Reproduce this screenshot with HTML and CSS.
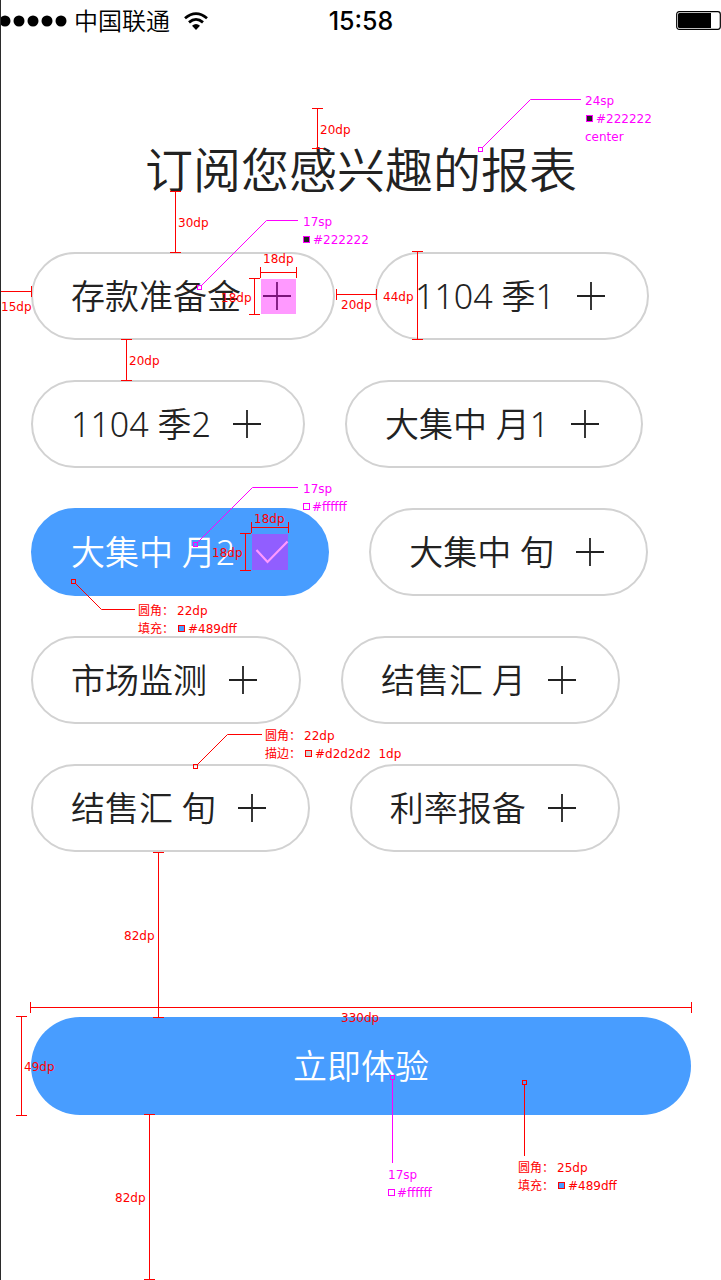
FILE: index.html
```html
<!DOCTYPE html>
<html lang="zh-CN">
<head>
<meta charset="utf-8">
<meta name="viewport" content="width=device-width, initial-scale=1">
<title>订阅您感兴趣的报表</title>
<link rel="stylesheet" href="styles.css">
</head>
<body>
<svg class="defs" aria-hidden="true">
  <symbol id="plus" viewBox="0 0 36 36"><path d="M4 18H32M18 4V32" fill="none" stroke="currentColor" stroke-width="1.8"/></symbol>
  <symbol id="check" viewBox="0 0 36 36"><path d="M3.5 16L14.5 28L34.5 7.5" fill="none" stroke="currentColor" stroke-width="2.2"/></symbol>
</svg>
<div class="page">
  <header class="status">
    <div class="carrier">
      <svg class="signal" viewBox="0 0 67 12" aria-hidden="true"><circle cx="4" cy="6" r="5.5"/><circle cx="18" cy="6" r="5.5"/><circle cx="32" cy="6" r="5.5"/><circle cx="46" cy="6" r="5.5"/><circle cx="60" cy="6" r="5.5"/></svg>
      <span>中国联通</span>
      <svg class="wifi" viewBox="0 0 24 18" aria-hidden="true"><g fill="none" stroke="#000" stroke-width="2.8"><path d="M1 6.2Q12 -3 23 6.2"/><path d="M5 10.4Q12 4.4 19 10.4"/></g><path d="M8 13.8Q12 10.4 16 13.8L12 18Z"/></svg>
    </div>
    <time class="clock">15:58</time>
    <svg class="battery" viewBox="0 0 45 19" aria-hidden="true"><rect x=".7" y=".7" width="43.6" height="17.6" rx="2.5" fill="#fff" stroke="#000" stroke-width="1.2"/><path d="M3.5 2H35V17H3.5Q2 17 2 15.5V3.5Q2 2 3.5 2Z"/></svg>
  </header>
  <main class="content">
    <h1 class="title">订阅您感兴趣的报表</h1>
    <div class="chips">
      <button class="chip" type="button" aria-pressed="false">存款准备金<svg class="icon"><use href="#plus"/></svg></button>
      <button class="chip" type="button" aria-pressed="false">1104 季1<svg class="icon"><use href="#plus"/></svg></button>
      <button class="chip" type="button" aria-pressed="false">1104 季2<svg class="icon"><use href="#plus"/></svg></button>
      <button class="chip" type="button" aria-pressed="false">大集中 月1<svg class="icon"><use href="#plus"/></svg></button>
      <button class="chip chip-on" type="button" aria-pressed="true">大集中 月2<svg class="icon"><use href="#check"/></svg></button>
      <button class="chip" type="button" aria-pressed="false">大集中 旬<svg class="icon"><use href="#plus"/></svg></button>
      <button class="chip" type="button" aria-pressed="false">市场监测<svg class="icon"><use href="#plus"/></svg></button>
      <button class="chip" type="button" aria-pressed="false">结售汇 月<svg class="icon"><use href="#plus"/></svg></button>
      <button class="chip" type="button" aria-pressed="false">结售汇 旬<svg class="icon"><use href="#plus"/></svg></button>
      <button class="chip" type="button" aria-pressed="false">利率报备<svg class="icon"><use href="#plus"/></svg></button>
    </div>
    <button class="submit" type="button">立即体验</button>
  </main>

  <svg class="specs" width="721" height="1280" viewBox="0 0 721 1280">
    <g class="area">
      <rect x="261" y="279" width="35" height="35"/>
      <rect x="252" y="534" width="36" height="36"/>
    </g>
    <!-- dimension lines -->
    <g class="red line">
      <path d="M317.5 108V149M312 108.5h11M312 148.5h11"/>
      <path d="M175.5 191V253M170 191.5h11M170 252.5h11"/>
      <path d="M126.5 339V381M121 339.5h11M121 380.5h11"/>
      <path d="M254.5 278V315M249 278.5h11M249 314.5h11"/>
      <path d="M417.5 251V340M412 251.5h11M412 339.5h11"/>
      <path d="M245.5 533V571M240 533.5h11M240 570.5h11"/>
      <path d="M158.5 852V1018M153 852.5h11M153 1017.5h11"/>
      <path d="M21.5 1016V1116M16 1016.5h11M16 1115.5h11"/>
      <path d="M149.5 1114V1280M144 1114.5h11M144 1279.5h11"/>
      <path d="M0 291.5H32M0.5 286v11M31.5 286v11"/>
      <path d="M260 272.5H297M260.5 267v11M296.5 267v11"/>
      <path d="M336 294.5H377M336.5 289v11M376.5 289v11"/>
      <path d="M251 527.5H289M251.5 522v11M288.5 522v11"/>
      <path d="M30 1007.5H692M30.5 1002v11M691.5 1002v11"/>
    </g>
    <g class="red label">
      <text x="320" y="134">20dp</text>
      <text x="178" y="227">30dp</text>
      <text x="129" y="365">20dp</text>
      <text x="221" y="302">18dp</text>
      <text x="383" y="301">44dp</text>
      <text x="212" y="557">18dp</text>
      <text x="124" y="940">82dp</text>
      <text x="24" y="1071">49dp</text>
      <text x="115" y="1202">82dp</text>
      <text x="1" y="311">15dp</text>
      <text x="263" y="263">18dp</text>
      <text x="341" y="309">20dp</text>
      <text x="254" y="523">18dp</text>
      <text x="341" y="1022">330dp</text>
    </g>
    <!-- text style callouts -->
    <g class="pink line">
      <path d="M482 148L530.5 99.5H581"/><rect x="478.5" y="147.5" width="4" height="4"/>
      <path d="M201 286L266.5 220.5H298"/><rect x="197.5" y="285.5" width="4" height="4"/>
      <path d="M197 543L252.5 487.5H298"/><rect x="193.5" y="542.5" width="4" height="4"/>
      <path d="M392.5 1080V1163"/><rect x="390.5" y="1075.5" width="4" height="4"/>
      <rect class="dark" x="586.5" y="115.5" width="6" height="6"/>
      <rect class="dark" x="303.5" y="236.5" width="6" height="6"/>
      <rect class="white" x="303.5" y="503.5" width="6" height="6"/>
      <rect class="white" x="388.5" y="1189.5" width="6" height="6"/>
    </g>
    <g class="pink label">
      <text x="585" y="105">24sp</text><text x="596" y="123">#222222</text><text x="585" y="141">center</text>
      <text x="303" y="226">17sp</text><text x="313" y="244">#222222</text>
      <text x="303" y="493">17sp</text><text x="312" y="511">#ffffff</text>
      <text x="388" y="1179">17sp</text><text x="397" y="1197">#ffffff</text>
    </g>
    <!-- shape callouts -->
    <g class="red line">
      <path d="M75 583L101.5 609.5H135"/><rect x="71.5" y="579.5" width="4" height="4"/>
      <path d="M197 765L227.5 734.5H262"/><rect x="193.5" y="764.5" width="4" height="4"/>
      <path d="M524.5 1085V1156"/><rect x="522.5" y="1080.5" width="4" height="4"/>
      <rect class="blue" x="178.5" y="625.5" width="6" height="6"/>
      <rect class="grey" x="305.5" y="750.5" width="6" height="6"/>
      <rect class="blue" x="558.5" y="1182.5" width="6" height="6"/>
    </g>
    <g class="red label">
      <text x="138" y="615">圆角：</text><text x="177" y="615">22dp</text>
      <text x="138" y="633">填充：</text><text x="188" y="633">#489dff</text>
      <text x="265" y="740">圆角：</text><text x="304" y="740">22dp</text>
      <text x="265" y="758">描边：</text><text x="315" y="758">#d2d2d2&#160; 1dp</text>
      <text x="518" y="1172">圆角：</text><text x="557" y="1172">25dp</text>
      <text x="518" y="1190">填充：</text><text x="568" y="1190">#489dff</text>
    </g>
  </svg>
</div>
</body>
</html>
```
FILE: styles.css
```css
* {
  box-sizing: border-box;
}

body {
  margin: 0;
  background: #fff;
  color: #222;
  font-family: "Noto Sans", "Noto Sans CJK SC", sans-serif;
  font-weight: 350;
}

button {
  font: inherit;
  cursor: pointer;
}

.defs {
  display: none;
}

.page {
  position: relative;
  min-height: 100vh;
  border-left: 1px solid #2b2b2b;
  overflow: hidden;
}

.status {
  display: grid;
  grid-template-columns: 1fr auto 1fr;
  align-items: center;
  height: 41px;
  color: #000;
}

.carrier {
  display: flex;
  align-items: center;
  font-size: 24px;
  line-height: 38px;
}

.signal {
  width: 67px;
  height: 12px;
  margin-right: 6px;
}

.wifi {
  width: 24px;
  height: 18px;
  margin-left: 14px;
}

.clock {
  font-family: Inter, sans-serif;
  font-size: 25px;
  font-weight: 500;
  line-height: 40px;
}

.battery {
  justify-self: end;
  width: 45px;
  height: 19px;
}

.content {
  display: flex;
  flex-direction: column;
  padding: 97px 30px 0;
}

.title {
  margin: 0 0 50px;
  font-size: 48px;
  font-weight: 350;
  line-height: 64px;
  text-align: center;
}

.chips {
  display: flex;
  flex-wrap: wrap;
  gap: 40px;
}

.chip {
  display: flex;
  align-items: center;
  gap: 18px;
  height: 88px;
  padding: 0 38px;
  border: 2px solid #d2d2d2;
  border-radius: 44px;
  background: #fff;
  color: #222;
  font-size: 34px;
  line-height: 48px;
  white-space: nowrap;
}

.chip-on {
  border-color: #489dff;
  background: #489dff;
  color: #fff;
}

.icon {
  width: 36px;
  height: 36px;
}

.submit {
  height: 98px;
  margin-top: 165px;
  border: 0;
  border-radius: 50px;
  background: #489dff;
  color: #fff;
  font-size: 34px;
  line-height: 48px;
}

/* measurement layer drawn over the screen */
.specs {
  position: absolute;
  top: 0;
  left: -1px;
  pointer-events: none;
}

.area {
  fill: #f0f;
  fill-opacity: 0.4;
}

.line {
  fill: none;
  stroke-width: 1;
}

.red.line {
  stroke: #f00;
}

.pink.line {
  stroke: #f0f;
}

.label {
  font-family: "DejaVu Sans", "Noto Sans CJK SC", sans-serif;
  font-size: 12px;
  font-weight: 400;
  white-space: pre;
}

.red.label {
  fill: #f00;
}

.pink.label {
  fill: #f0f;
}

.dark {
  fill: #222;
}

.white {
  fill: #fff;
}

.blue {
  fill: #489dff;
}

.grey {
  fill: #d2d2d2;
}
```
